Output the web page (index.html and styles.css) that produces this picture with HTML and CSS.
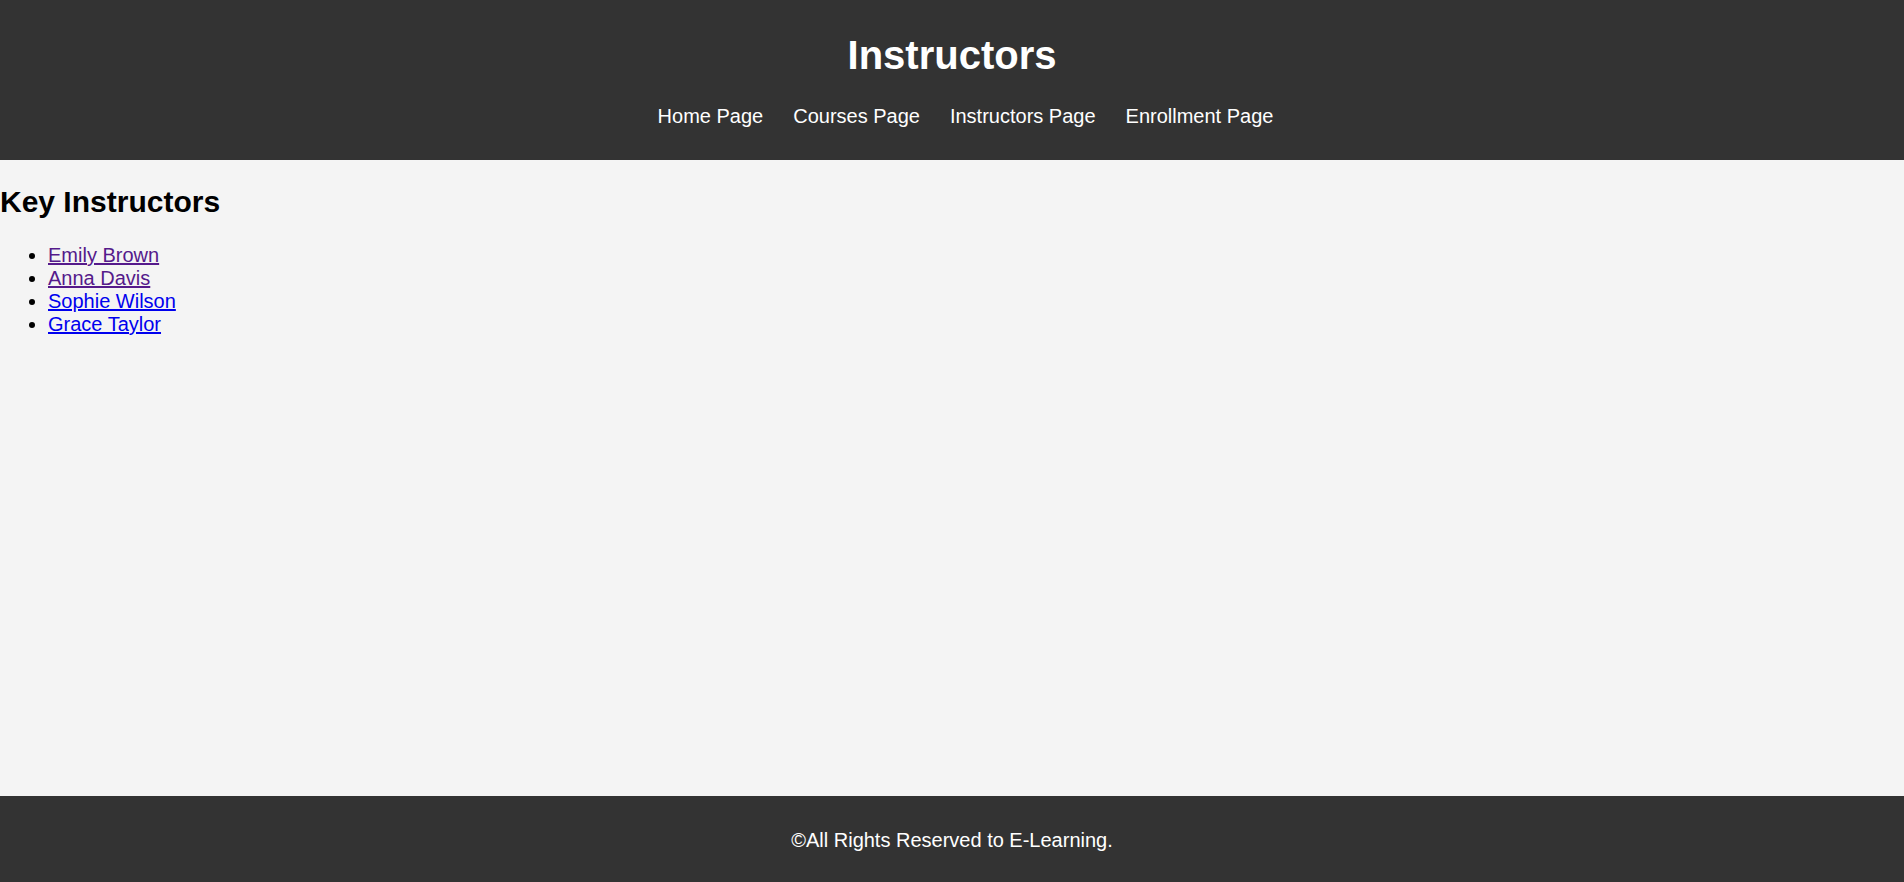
FILE: index.html
```html
<!DOCTYPE html>
<html lang="en">
<head>
<meta charset="utf-8">
<title>Instructors</title>
<link rel="stylesheet" href="styles.css">
</head>
<body>
<header class="site-header">
  <h1 class="site-title">Instructors</h1>
  <nav class="site-nav">
    <a href="#" class="nav-link">Home Page</a>
    <a href="#" class="nav-link">Courses Page</a>
    <a href="#" class="nav-link">Instructors Page</a>
    <a href="#" class="nav-link">Enrollment Page</a>
  </nav>
</header>
<main class="content">
  <h2 class="section-title">Key Instructors</h2>
  <ul class="instructor-list">
    <li><a href="#" class="instructor-link visited">Emily Brown</a></li>
    <li><a href="#" class="instructor-link visited">Anna Davis</a></li>
    <li><a href="#" class="instructor-link">Sophie Wilson</a></li>
    <li><a href="#" class="instructor-link">Grace Taylor</a></li>
  </ul>
</main>
<footer class="site-footer">
  <p class="footer-text">©All Rights Reserved to E-Learning.</p>
</footer>
</body>
</html>
```
FILE: styles.css
```css
html, body {
  margin: 0;
  padding: 0;
}
body {
  font-family: "Liberation Sans", Arial, sans-serif;
  font-size: 20px;
  line-height: 23px;
  background: #f4f4f4;
  color: #000;
  min-height: 100vh;
  display: flex;
  flex-direction: column;
}
.site-header {
  background: #333;
  color: #fff;
  text-align: center;
  padding: 32px 0 32px;
}
.site-title {
  margin: 0 0 27px;
  font-size: 40px;
  line-height: 46px;
  font-weight: bold;
}
.site-nav {
  display: flex;
  justify-content: center;
  gap: 30px;
  padding-left: 27px;
  height: 23px;
}
.nav-link {
  color: #fff;
  text-decoration: none;
}
.content {
  flex: 1;
}
.section-title {
  margin: 25px 0 25px;
  font-size: 30px;
  line-height: 34px;
  font-weight: bold;
}
.instructor-list {
  margin: 0;
  padding-left: 48px;
}
.instructor-link {
  color: #0000ee;
  text-decoration: underline;
}
.instructor-link.visited {
  color: #551a8b;
}
.site-footer {
  background: #333;
  color: #fff;
  text-align: center;
  padding: 33px 0 30px;
}
.footer-text {
  margin: 0;
}
```
